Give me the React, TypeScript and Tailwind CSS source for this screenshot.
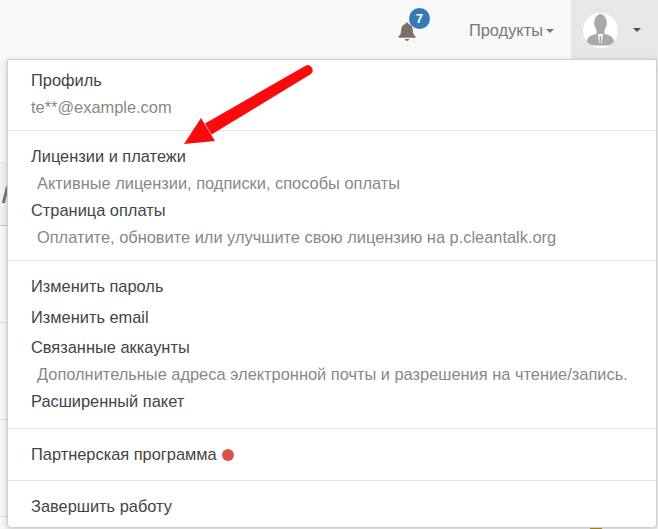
import { useState } from "react";

function Item({ text, sub, className = "" }: { text: string; sub?: string; className?: string }) {
  return (
    <div className={className}>
      <div className="h-[27px] pl-[23px] leading-[27px] text-[#444]">{text}</div>
      {sub && <div className="h-[27px] pl-[29px] leading-[27px] text-[#888]">{sub}</div>}
    </div>
  );
}

function Divider({ className = "" }: { className?: string }) {
  return <div className={`h-px bg-[#e5e5e5] ${className}`} />;
}

function Avatar() {
  return (
    <svg width="35" height="35" viewBox="0 0 35 35" className="rounded-full bg-white">
      <ellipse cx="17.500" cy="10" rx="6.300" ry="9" fill="#a9a9a9" />
      <path d="M13.500 16h8v6h-8z" fill="#a9a9a9" />
      <path d="M3.700 31c0-6 2-8.500 10.300-10h7c8.300 1.500 10 4 10.300 10-1 2-27.300 2-28.300 0z" fill="#a9a9a9" />
      <path d="M15 21h5l-1 9h-3z" fill="#fff" />
      <path d="M16.800 23h1.400l.4 6.500h-2.200z" fill="#a9a9a9" />
    </svg>
  );
}

// what shows of the page behind the menu, at the left edge
function PageSliver() {
  return (
    <div className="flex w-[7px] shrink-0 flex-col pt-[103px]">
      <div className="h-px bg-[#e0e0e0]" />
      <div className="flex h-[63px] items-center justify-end border-b border-[#c4c4c4] bg-[#f0f0f0]">
        <span className="h-[17px] w-[3px] skew-x-[-14deg] bg-[#777]" />
      </div>
      <div className="h-[97px] border-b border-[#dcdcdc]" />
      <div className="h-[97px] border-b border-[#dcdcdc]" />
      <div className="h-[97px] border-b border-[#dcdcdc]" />
    </div>
  );
}

export default function App() {
  const [notes] = useState(7);

  return (
    <div className="relative flex h-[529px] w-[658px] flex-col overflow-hidden bg-[#f7f7f7] font-['Liberation_Sans',Arial,sans-serif] text-[16.4px]">
      <nav className="flex h-[60px] shrink-0 items-stretch justify-end bg-[#f8f8f8]">
        <div className="relative mr-[50px] flex w-6 items-center justify-center">
          <svg width="18" height="21" viewBox="0 0 18 21" className="mt-[2px]" fill="#7a7069">
            <path d="M9 1.500c.9 0 1.500.6 1.500 1.400 3 .7 4.300 3 4.300 6 0 3.500 1 4.700 2.700 6.600v1.200H.5v-1.200c1.700-1.900 2.700-3.100 2.700-6.600 0-3 1.300-5.300 4.300-6 0-.8.6-1.400 1.500-1.400z" />
            <path d="M6.800 18h4.400c-.3 1.200-1.200 2-2.200 2s-1.900-.8-2.200-2z" />
          </svg>
          <span className="absolute left-[14px] top-[8px] flex h-[21px] w-[21px] items-center justify-center rounded-full bg-[#337ab7] text-[13px] font-bold text-white">
            {notes}
          </span>
        </div>
        <div className="mr-[17px] flex items-center text-[#777]">
          Продукты
          <span className="ml-[3px] mt-[1px] border-x-[4px] border-t-[4px] border-x-transparent border-t-[#777]" />
        </div>
        <div className="flex w-[87px] items-center bg-[#e7e7e7] pl-3">
          <Avatar />
          <span className="ml-[15px] border-x-[4px] border-t-[4px] border-x-transparent border-t-[#555]" />
        </div>
      </nav>

      <div className="-mt-px flex flex-1">
        <PageSliver />
        <div className="flex w-[650px] flex-col">
          <div className="z-10 h-[469px] rounded-b border border-[#cfcfcf] bg-white pt-[7px] shadow-[0_2px_6px_rgba(0,0,0,0.18)]">
            <div className="h-[27px] pl-[23px] leading-[27px] text-[#444]">Профиль</div>
            <div className="h-[27px] pl-[23px] leading-[27px] text-[#888]">te**@example.com</div>
            <Divider className="mt-[9px]" />
            <Item className="mt-3" text="Лицензии и платежи" sub="Активные лицензии, подписки, способы оплаты" />
            <Item text="Страница оплаты" sub="Оплатите, обновите или улучшите свою лицензию на p.cleantalk.org" />
            <Divider className="mt-[9px]" />
            <Item className="mt-3" text="Изменить пароль" />
            <Item className="mt-1" text="Изменить email" />
            <Item className="mt-[3px]" text="Связанные аккаунты" sub="Дополнительные адреса электронной почты и разрешения на чтение/запись." />
            <Item text="Расширенный пакет" />
            <Divider className="mt-[13px]" />
            <div className="mt-3 flex h-[27px] items-center pl-[23px] text-[#444]">
              Партнерская программа
              <span className="ml-[5px] size-3 rounded-full bg-[#d9534f]" />
            </div>
            <Divider className="mt-3" />
            <Item className="mt-3" text="Завершить работу" />
          </div>
          <div className="ml-[583px] h-px w-3 bg-[#b8960c]" />
        </div>
      </div>

      {/* annotation arrow drawn over the menu */}
      <svg width="140" height="90" viewBox="0 0 140 90" className="absolute left-[180px] top-[60px] z-20">
        <path d="M125.500 5.700A5 5 0 0 1 130.500 14.300L31.500 74.500 25 63.500Z" fill="#fa0a0a" />
        <path d="M4 84L21 58 35 81Z" fill="#fa0a0a" />
      </svg>
    </div>
  );
}
